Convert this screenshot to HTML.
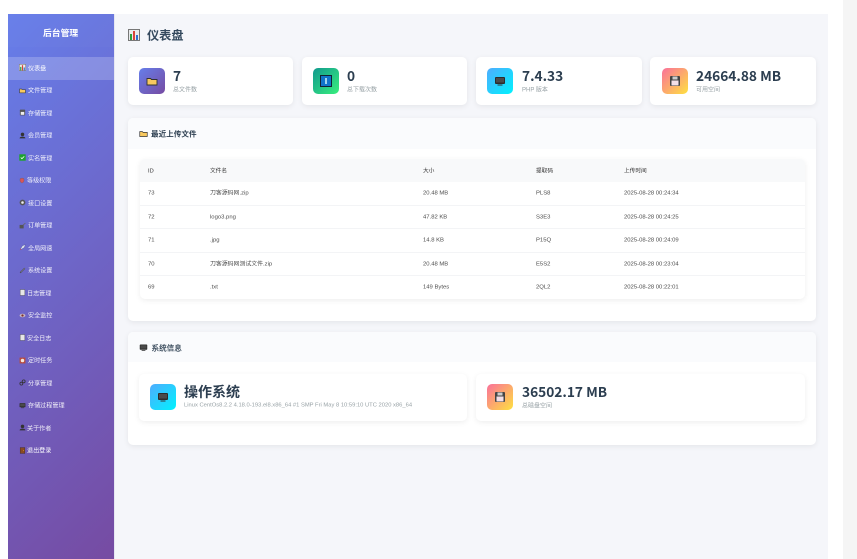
<!DOCTYPE html>
<html><head><meta charset="utf-8"><style>
*{margin:0;padding:0;box-sizing:border-box}
html,body{width:857px;height:559px;overflow:hidden;background:#fff}
body{font-family:"Liberation Sans","Noto Sans CJK SC",sans-serif;position:relative;color:#2c3e50}
div,span,svg{position:absolute}
svg{filter:blur(.25px)}
.t{white-space:nowrap;line-height:1;transform:translateY(calc(-50% + 1.4px));filter:blur(.3px)}
#side{left:8px;top:14px;width:106px;height:545px;background:linear-gradient(135deg,#667eea,#764ba2)}
#sep{left:114px;top:14px;width:1px;height:545px;background:#e6e7f2}
#main{left:115px;top:14px;width:713px;height:545px;background:#f5f6fa}
#bar{left:843px;top:0;width:14px;height:559px;background:#f5f5f5}
.nav{color:rgba(255,255,255,.9);font-size:6.1px}
.card{background:#fff;border-radius:5px;box-shadow:0 1.5px 6px rgba(0,0,0,.07)}
.ic{width:26px;height:26px;border-radius:5px}
.val{font-family:"Noto Sans CJK SC","Liberation Sans",sans-serif;font-weight:700;font-size:13.700px;color:#2c3e50;transform:translateY(-50%)}
.lab{font-size:6px;color:#98a2a6}
.sh{background:#fafbfd;border-radius:5px 5px 0 0}
.st{font-size:7.600px;font-weight:700;color:#2c3e50}
.c{font-size:5.900px;color:#4d4d4d}
.h{font-size:5.700px;color:#333}
.ln{height:1px;background:#f3f4f6;left:140px;width:665px}
</style></head><body>
<svg width="0" height="0" style="left:0;top:0"><defs>
<symbol id="chart" viewBox="0 0 12 12"><rect x=".5" y=".5" width="11" height="11" fill="#e9eaec" stroke="#777"/><rect x="2" y="5" width="2" height="6" fill="#2a9d3a"/><rect x="5" y="2" width="2" height="9" fill="#d9433a"/><rect x="8" y="6" width="2" height="5" fill="#2f6fd0"/></symbol>
<symbol id="folder" viewBox="0 0 12 12"><path d="M1 3.500h3.500l1 1H11v5.500H1z" fill="#f7c85f" stroke="#333" stroke-width=".9"/></symbol>
<symbol id="disk" viewBox="0 0 12 12"><rect x="1" y="1" width="10" height="10" rx="1" fill="#444"/><rect x="2.500" y="5.500" width="7" height="5" fill="#f3dfe8"/><rect x="3.500" y="1.500" width="5" height="3" fill="#ccc"/></symbol>
<symbol id="pc" viewBox="0 0 12 12"><rect x="1" y="2" width="10" height="7" rx="1" fill="#2c2c2c"/><rect x="2" y="3" width="8" height="4.500" fill="#4a4a4a"/><path d="M3.500 9.500h5v1h-5z" fill="#333"/></symbol>
<symbol id="dl" viewBox="0 0 12 12"><rect x=".5" y=".5" width="11" height="11" fill="#1173c9" stroke="#123"/><rect x="5.300" y="3" width="1.400" height="6" fill="#dff"/></symbol>
<symbol id="lock" viewBox="0 0 12 12"><rect x="1.500" y="1" width="9" height="10" rx="1" fill="#555"/><rect x="3" y="5" width="6" height="5" fill="#eee"/></symbol>
<symbol id="user" viewBox="0 0 12 12"><circle cx="6" cy="4" r="3" fill="#333"/><path d="M1 11c0-4 10-4 10 0z" fill="#333"/></symbol>
<symbol id="check" viewBox="0 0 12 12"><rect x=".5" y=".5" width="11" height="11" fill="#1da32f"/><path d="M3 6l2 2 4-4" fill="none" stroke="#fff" stroke-width="1.300"/></symbol>
<symbol id="shield" viewBox="0 0 12 12"><path d="M6 1l4 1.500v4c0 2-2 4-4 4.500-2-.5-4-2.500-4-4.500v-4z" fill="#d8555a" stroke="#555" stroke-width=".6"/></symbol>
<symbol id="gear" viewBox="0 0 12 12"><circle cx="6" cy="6" r="5" fill="#555"/><circle cx="6" cy="6" r="2.200" fill="#eee"/></symbol>
<symbol id="cart" viewBox="0 0 12 12"><rect x="1" y="5" width="7" height="6" fill="#555"/><path d="M7 5l4-3" stroke="#666" stroke-width="1.500"/></symbol>
<symbol id="rocket" viewBox="0 0 12 12"><path d="M11 1L6 3 3 8l1 1 5-3z" fill="#dfe6f2" stroke="#447" stroke-width=".5"/><path d="M1 11l2-3 1 1z" fill="#e3443a"/></symbol>
<symbol id="pen" viewBox="0 0 12 12"><path d="M10 2L2 10" stroke="#444" stroke-width="2"/><path d="M10 2L3 9" stroke="#aaa" stroke-width=".7"/></symbol>
<symbol id="doc" viewBox="0 0 12 12"><rect x="2" y="1" width="8" height="10" fill="#e6e6e6" stroke="#555" stroke-width=".7"/></symbol>
<symbol id="eye" viewBox="0 0 12 12"><ellipse cx="6" cy="6" rx="5" ry="3" fill="#c9b9c4"/><circle cx="6" cy="6" r="2" fill="#7a2e2e"/></symbol>
<symbol id="clock" viewBox="0 0 12 12"><rect x="1" y="1" width="10" height="10" fill="#b84b3e"/><circle cx="6" cy="6" r="3" fill="#f2e8e0"/></symbol>
<symbol id="link" viewBox="0 0 12 12"><circle cx="4" cy="8" r="2.500" fill="none" stroke="#333" stroke-width="1.400"/><circle cx="8" cy="4" r="2.500" fill="none" stroke="#333" stroke-width="1.400"/></symbol>
<symbol id="door" viewBox="0 0 12 12"><rect x="2" y="1" width="8" height="10" fill="#8a4a22" stroke="#3d2a20" stroke-width=".7"/><circle cx="8" cy="6" r=".7" fill="#fc3"/></symbol>
</defs></svg>

<div id="side"></div><div id="sep"></div><div id="main"></div><div id="bar"></div>
<div style="left:8px;top:14px;width:106px;height:33px;background:rgba(255,255,255,.02)"></div>
<div class="t" style="left:43px;top:31.500px;font-size:8.800px;font-weight:700;color:#fff">后台管理</div>
<div style="left:8px;top:57px;width:106px;height:22.500px;background:rgba(255,255,255,.2)"></div>

<svg style="left:19px;top:64px" width="7" height="7"><use href="#chart"/></svg><div class="t nav" style="left:28px;top:67.500px;color:#fff">仪表盘</div>
<svg style="left:19px;top:86.500px" width="7" height="7"><use href="#folder"/></svg><div class="t nav" style="left:28px;top:90px">文件管理</div>
<svg style="left:19px;top:109px" width="7" height="7"><use href="#lock"/></svg><div class="t nav" style="left:28px;top:112.500px">存储管理</div>
<svg style="left:19px;top:131.500px" width="7" height="7"><use href="#user"/></svg><div class="t nav" style="left:28px;top:135px">会员管理</div>
<svg style="left:19px;top:154px" width="7" height="7"><use href="#check"/></svg><div class="t nav" style="left:28px;top:157.500px">实名管理</div>
<svg style="left:19px;top:176.500px" width="6" height="7"><use href="#shield"/></svg><div class="t nav" style="left:27px;top:180px">等级权限</div>
<svg style="left:19px;top:199px" width="7" height="7"><use href="#gear"/></svg><div class="t nav" style="left:28px;top:202.500px">接口设置</div>
<svg style="left:19px;top:221.500px" width="7" height="7"><use href="#cart"/></svg><div class="t nav" style="left:28px;top:225px">订单管理</div>
<svg style="left:19px;top:244px" width="7" height="7"><use href="#rocket"/></svg><div class="t nav" style="left:28px;top:247.500px">全局网速</div>
<svg style="left:19px;top:266.500px" width="7" height="7"><use href="#pen"/></svg><div class="t nav" style="left:28px;top:270px">系统设置</div>
<svg style="left:18.500px;top:289px" width="7" height="7"><use href="#doc"/></svg><div class="t nav" style="left:27px;top:292.500px">日志管理</div>
<svg style="left:19px;top:311.500px" width="7" height="7"><use href="#eye"/></svg><div class="t nav" style="left:28px;top:315px">安全监控</div>
<svg style="left:18.500px;top:334px" width="7" height="7"><use href="#doc"/></svg><div class="t nav" style="left:27px;top:337.500px">安全日志</div>
<svg style="left:19px;top:356.500px" width="7" height="7"><use href="#clock"/></svg><div class="t nav" style="left:28px;top:360px">定时任务</div>
<svg style="left:19px;top:379px" width="7" height="7"><use href="#link"/></svg><div class="t nav" style="left:28px;top:382.500px">分享管理</div>
<svg style="left:19px;top:401.500px" width="7" height="7"><use href="#pc"/></svg><div class="t nav" style="left:28px;top:405px">存储过程管理</div>
<svg style="left:19px;top:424px" width="7" height="7"><use href="#user"/></svg><div class="t nav" style="left:27px;top:427.500px">关于作者</div>
<svg style="left:19px;top:446.500px" width="7" height="7"><use href="#door"/></svg><div class="t nav" style="left:27px;top:450px;color:#fff">退出登录</div>

<svg style="left:128px;top:29px" width="12" height="12"><use href="#chart"/></svg>
<div class="t" style="left:147px;top:34px;font-size:12.200px;font-weight:700;color:#34495e">仪表盘</div>

<div class="card" style="left:128px;top:57px;width:165px;height:48px"></div>
<div class="card" style="left:302px;top:57px;width:165px;height:48px"></div>
<div class="card" style="left:476px;top:57px;width:166px;height:48px"></div>
<div class="card" style="left:650px;top:57px;width:166px;height:48px"></div>
<div class="ic" style="left:139px;top:68px;background:linear-gradient(135deg,#667eea,#764ba2)"></div>
<svg style="left:146px;top:75px" width="12" height="12"><use href="#folder"/></svg>
<div class="ic" style="left:313px;top:68px;background:linear-gradient(135deg,#11998e,#38ef7d)"></div>
<svg style="left:320px;top:75px" width="12" height="12"><use href="#dl"/></svg>
<div class="ic" style="left:487px;top:68px;background:linear-gradient(135deg,#4facfe,#00f2fe)"></div>
<svg style="left:494px;top:75px" width="12" height="12"><use href="#pc"/></svg>
<div class="ic" style="left:662px;top:68px;background:linear-gradient(135deg,#fa709a,#fee140)"></div>
<svg style="left:669px;top:75px" width="12" height="12"><use href="#disk"/></svg>
<div class="t val" style="left:173px;top:76px">7</div><div class="t lab" style="left:173px;top:88.500px">总文件数</div>
<div class="t val" style="left:347px;top:76px">0</div><div class="t lab" style="left:347px;top:88.500px">总下载次数</div>
<div class="t val" style="left:522px;top:76px">7.4.33</div><div class="t lab" style="left:522px;top:88.500px">PHP 版本</div>
<div class="t val" style="left:696px;top:76px">24664.88 MB</div><div class="t lab" style="left:696px;top:88.500px">可用空间</div>

<div class="card" style="left:128px;top:118px;width:688px;height:203px"></div>
<div class="sh" style="left:128px;top:118px;width:688px;height:31px"></div>
<svg style="left:139px;top:128.500px" width="9" height="9"><use href="#folder"/></svg>
<div class="t st" style="left:151px;top:132.500px">最近上传文件</div>

<div class="card" style="left:140px;top:159px;width:665px;height:140px"></div>
<div style="left:140px;top:159px;width:665px;height:23px;background:#f8f9fa;border-radius:5px 5px 0 0"></div>
<div class="ln" style="top:205px"></div><div class="ln" style="top:228px"></div><div class="ln" style="top:252px"></div><div class="ln" style="top:275px"></div>

<div class="t h" style="left:148px;top:170.500px">ID</div><div class="t h" style="left:210px;top:170.500px">文件名</div><div class="t h" style="left:423px;top:170.500px">大小</div><div class="t h" style="left:536px;top:170.500px">提取码</div><div class="t h" style="left:624px;top:170.500px">上传时间</div>

<div class="t c" style="left:148px;top:193px">73</div><div class="t c" style="left:210px;top:193px">刀客源码网.zip</div><div class="t c" style="left:423px;top:193px">20.48 MB</div><div class="t c" style="left:536px;top:193px">PLS8</div><div class="t c" style="left:624px;top:193px">2025-08-28 00:24:34</div>
<div class="t c" style="left:148px;top:216.500px">72</div><div class="t c" style="left:210px;top:216.500px">logo3.png</div><div class="t c" style="left:423px;top:216.500px">47.82 KB</div><div class="t c" style="left:536px;top:216.500px">S3E3</div><div class="t c" style="left:624px;top:216.500px">2025-08-28 00:24:25</div>
<div class="t c" style="left:148px;top:240px">71</div><div class="t c" style="left:210px;top:240px">.jpg</div><div class="t c" style="left:423px;top:240px">14.8 KB</div><div class="t c" style="left:536px;top:240px">P15Q</div><div class="t c" style="left:624px;top:240px">2025-08-28 00:24:09</div>
<div class="t c" style="left:148px;top:263.500px">70</div><div class="t c" style="left:210px;top:263.500px">刀客源码网测试文件.zip</div><div class="t c" style="left:423px;top:263.500px">20.48 MB</div><div class="t c" style="left:536px;top:263.500px">E5S2</div><div class="t c" style="left:624px;top:263.500px">2025-08-28 00:23:04</div>
<div class="t c" style="left:148px;top:287px">69</div><div class="t c" style="left:210px;top:287px">.txt</div><div class="t c" style="left:423px;top:287px">149 Bytes</div><div class="t c" style="left:536px;top:287px">2QL2</div><div class="t c" style="left:624px;top:287px">2025-08-28 00:22:01</div>

<div class="card" style="left:128px;top:332px;width:688px;height:113px"></div>
<div class="sh" style="left:128px;top:332px;width:688px;height:30px"></div>
<svg style="left:139px;top:343px" width="9" height="9"><use href="#pc"/></svg>
<div class="t st" style="left:151.500px;top:346.500px;font-weight:400;-webkit-text-stroke:.15px #2c3e50">系统信息</div>

<div class="card" style="left:139px;top:374px;width:328px;height:47px"></div>
<div class="card" style="left:476px;top:374px;width:329px;height:47px"></div>
<div class="ic" style="left:150px;top:384px;background:linear-gradient(135deg,#4facfe,#00f2fe)"></div>
<svg style="left:157px;top:391px" width="12" height="12"><use href="#pc"/></svg>
<div class="ic" style="left:487px;top:384px;background:linear-gradient(135deg,#fa709a,#fee140)"></div>
<svg style="left:494px;top:391px" width="12" height="12"><use href="#disk"/></svg>
<div class="t val" style="left:184px;top:392px;font-size:14px">操作系统</div>
<div class="t lab" style="left:184px;top:405px;font-size:5.800px">Linux CentOs8.2.2 4.18.0-193.el8.x86_64 #1 SMP Fri May 8 10:59:10 UTC 2020 x86_64</div>
<div class="t val" style="left:522px;top:392px">36502.17 MB</div>
<div class="t lab" style="left:522px;top:404.500px">总磁盘空间</div>
</body></html>
